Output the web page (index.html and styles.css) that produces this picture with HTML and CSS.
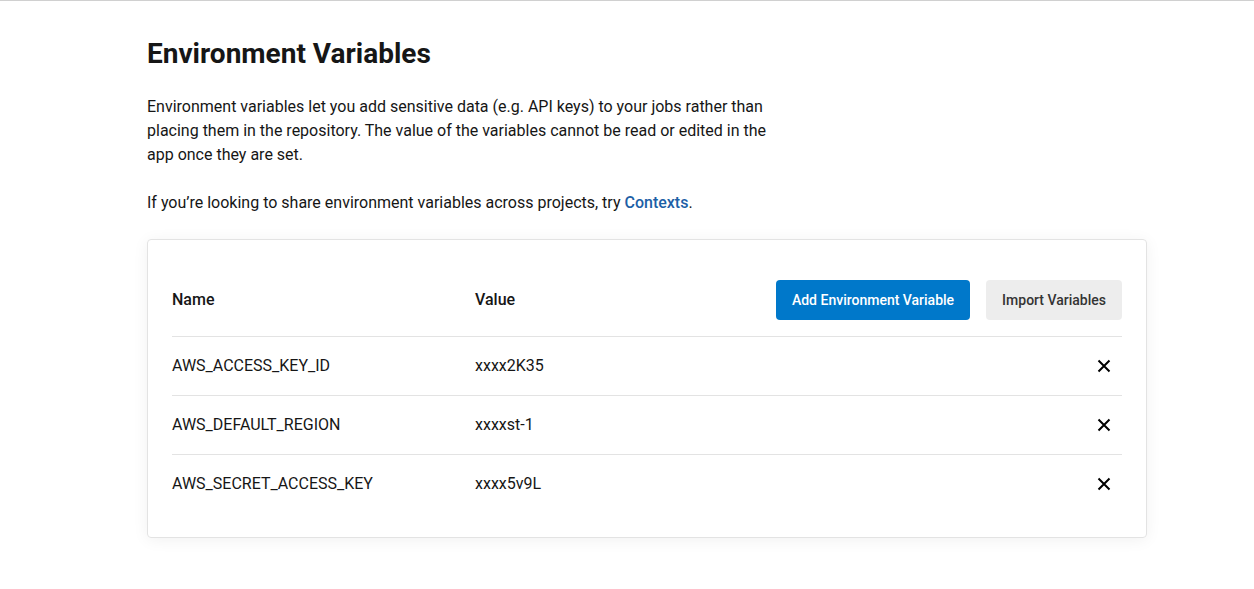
FILE: index.html
```html
<!DOCTYPE html>
<html lang="en">
<head>
<meta charset="utf-8">
<meta name="viewport" content="width=device-width, initial-scale=1">
<title>Environment Variables</title>
<link rel="stylesheet" href="styles.css">
</head>
<body>
<main class="page">
  <h1 class="title">Environment Variables</h1>
  <div class="intro">
    <p>Environment variables let you add sensitive data (e.g. API keys) to your jobs rather than placing them in the repository. The value of the variables cannot be read or edited in the app once they are set.</p>
    <p>If you’re looking to share environment variables across projects, try <a class="link" href="#contexts">Contexts</a>.</p>
  </div>
  <section class="card">
    <table class="variables">
      <thead>
        <tr>
          <th class="name" scope="col">Name</th>
          <th class="value" scope="col">Value</th>
          <td class="actions">
            <div class="buttons">
              <button class="button primary" type="button">Add Environment Variable</button>
              <button class="button secondary" type="button">Import Variables</button>
            </div>
          </td>
        </tr>
      </thead>
      <tbody>
        <tr>
          <td>AWS_ACCESS_KEY_ID</td>
          <td>xxxx2K35</td>
          <td class="actions"><button class="remove" type="button" aria-label="Delete AWS_ACCESS_KEY_ID"><svg class="cross" viewBox="0 0 14 14" aria-hidden="true"><path d="M1.5 1.5l11 11M12.5 1.5l-11 11"/></svg></button></td>
        </tr>
        <tr>
          <td>AWS_DEFAULT_REGION</td>
          <td>xxxxst-1</td>
          <td class="actions"><button class="remove" type="button" aria-label="Delete AWS_DEFAULT_REGION"><svg class="cross" viewBox="0 0 14 14" aria-hidden="true"><path d="M1.5 1.5l11 11M12.5 1.5l-11 11"/></svg></button></td>
        </tr>
        <tr>
          <td>AWS_SECRET_ACCESS_KEY</td>
          <td>xxxx5v9L</td>
          <td class="actions"><button class="remove" type="button" aria-label="Delete AWS_SECRET_ACCESS_KEY"><svg class="cross" viewBox="0 0 14 14" aria-hidden="true"><path d="M1.5 1.5l11 11M12.5 1.5l-11 11"/></svg></button></td>
        </tr>
      </tbody>
    </table>
  </section>
</main>
</body>
</html>
```
FILE: styles.css
```css
* {
  box-sizing: border-box;
}

body {
  margin: 0;
  padding-left: 40px;
  border-top: 1px solid #d0d0d0;
  background: #fff;
  color: #161616;
  font: 16px/24px Roboto, sans-serif;
}

.page {
  max-width: 1000px;
  margin: 0 auto;
  padding: 32px 0;
}

.title {
  margin: 0 0 20px;
  font-size: 28px;
  line-height: 42px;
  font-weight: 700;
}

.intro {
  max-width: 624px;
}

.intro p {
  margin: 0 0 24px;
}

.link {
  color: #1d5fa6;
  font-weight: 500;
  text-decoration: none;
}

.card {
  padding: 24px;
  border: 1px solid #e3e3e3;
  border-radius: 4px;
  box-shadow: 0 2px 16px rgba(0, 0, 0, 0.06);
}

.variables {
  width: 100%;
  table-layout: fixed;
  border-collapse: separate;
  border-spacing: 0;
}

th,
td {
  height: 59px;
  padding: 0;
  border-bottom: 1px solid #e3e3e3;
  text-align: left;
  vertical-align: middle;
}

th {
  font-weight: 500;
}

thead th,
thead td {
  height: 73px;
}

tbody tr:last-child td {
  height: 58px;
  border-bottom: 0;
}

.name {
  width: 303px;
}

.value {
  width: 250px;
}

.buttons {
  display: flex;
  justify-content: flex-end;
  gap: 16px;
}

.button {
  height: 40px;
  padding: 0 16px;
  border: 0;
  border-radius: 4px;
  font: 500 14px/20px Roboto, sans-serif;
  white-space: nowrap;
}

.primary {
  background: #0078ca;
  color: #fff;
}

.secondary {
  background: #ededed;
  color: #343434;
}

td.actions {
  text-align: right;
}

.remove {
  display: inline-flex;
  padding: 11px;
  border: 0;
  background: none;
  color: #000;
  vertical-align: middle;
}

.cross {
  width: 14px;
  height: 14px;
  fill: none;
  stroke: currentColor;
  stroke-width: 2;
}
```
